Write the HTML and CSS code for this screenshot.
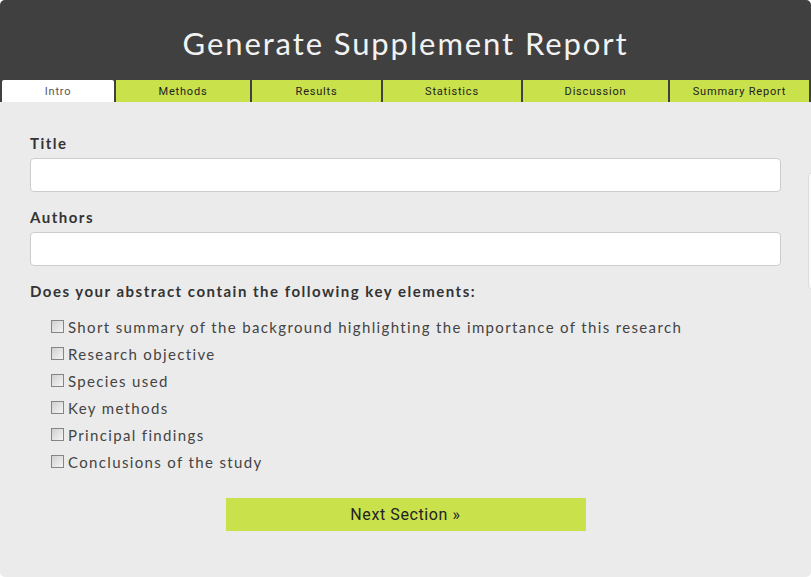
FILE: index.html
```html
<!DOCTYPE html>
<html lang="en">
<head>
<meta charset="utf-8">
<title>Generate Supplement Report</title>
<link rel="stylesheet" href="styles.css">
</head>
<body>
<div class="app">
  <header class="hero">
    <h1 class="hero-title">Generate Supplement Report</h1>
  </header>
  <nav class="tabs">
    <a class="tab tab-active">Intro</a>
    <a class="tab">Methods</a>
    <a class="tab">Results</a>
    <a class="tab">Statistics</a>
    <a class="tab">Discussion</a>
    <a class="tab">Summary Report</a>
  </nav>
  <main class="panel">
    <label class="field-label" for="title">Title</label>
    <input class="text-input" id="title" type="text">
    <label class="field-label" for="authors">Authors</label>
    <input class="text-input" id="authors" type="text">
    <p class="field-label question">Does your abstract contain the following key elements:</p>
    <ul class="checklist">
      <li><label class="check-row"><input class="check" type="checkbox"><span>Short summary of the background highlighting the importance of this research</span></label></li>
      <li><label class="check-row"><input class="check" type="checkbox"><span>Research objective</span></label></li>
      <li><label class="check-row"><input class="check" type="checkbox"><span>Species used</span></label></li>
      <li><label class="check-row"><input class="check" type="checkbox"><span>Key methods</span></label></li>
      <li><label class="check-row"><input class="check" type="checkbox"><span>Principal findings</span></label></li>
      <li><label class="check-row"><input class="check" type="checkbox"><span>Conclusions of the study</span></label></li>
    </ul>
    <div class="actions">
      <button class="next-btn" type="button">Next Section &raquo;</button>
    </div>
  </main>
  <div class="side-tab"></div>
</div>
</body>
</html>
```

FILE: styles.css
```css
html, body {
  margin: 0;
  padding: 0;
  background: #ffffff;
  overflow: hidden;
}

.app {
  position: relative;
  width: 811px;
  height: 577px;
  display: flex;
  flex-direction: column;
  border-radius: 5px;
  overflow: hidden;
  background: #ebebeb;
}

.hero {
  background: #404040;
  height: 80px;
  display: flex;
  align-items: center;
  justify-content: center;
}

.hero-title {
  margin: 6px 0 0 0;
  font-family: "Lato", "Open Sans", sans-serif;
  font-weight: 400;
  font-size: 31px;
  letter-spacing: 1.9px;
  color: #f2f2f2;
}

.tabs {
  display: grid;
  grid-template-columns: 112px 134px 129px 138px 145px 139px;
  column-gap: 2px;
  padding: 0 2px;
  background: #404040;
  height: 22px;
}

.tab {
  display: flex;
  align-items: center;
  justify-content: center;
  background: #c9e14b;
  color: #222;
  font-family: "Roboto", "Liberation Sans", sans-serif;
  font-size: 11px;
  letter-spacing: 0.8px;
  padding-top: 1px;
}

.tab-active {
  background: #ffffff;
  color: #555;
  border-radius: 2px 2px 0 0;
}

.panel {
  flex: 1;
  padding: 31px 30px 0 30px;
  display: flex;
  flex-direction: column;
}

.field-label {
  display: block;
  margin: 0;
  font-family: "Lato", "Open Sans", sans-serif;
  font-weight: 700;
  font-size: 15px;
  line-height: 20px;
  letter-spacing: 1.5px;
  color: #333;
}

.text-input {
  display: block;
  box-sizing: border-box;
  width: 100%;
  height: 34px;
  margin: 5px 0 15px 0;
  border: 1px solid #cccccc;
  border-radius: 4px;
  background: #fff;
}

.question {
  margin-top: 0;
}

.checklist {
  list-style: none;
  margin: 12px 0 0 0;
  padding: 0 0 0 21px;
}

.checklist li {
  height: 27px;
  display: flex;
  align-items: center;
}

.check-row {
  display: flex;
  align-items: center;
  gap: 4px;
  font-family: "Lato", "Open Sans", sans-serif;
  font-size: 15px;
  letter-spacing: 1.35px;
  color: #444;
}

.check {
  appearance: none;
  -webkit-appearance: none;
  box-sizing: border-box;
  width: 13px;
  height: 13px;
  margin: 0;
  border: 1px solid #858585;
  background: linear-gradient(135deg, #d0d0d0, #f5f5f5);
}

.actions {
  display: flex;
  justify-content: center;
  margin-top: 23px;
}

.next-btn {
  width: 360px;
  height: 33px;
  border: none;
  background: #c9e14b;
  color: #222;
  font-family: "Roboto", "Liberation Sans", sans-serif;
  font-size: 16px;
  letter-spacing: 0.6px;
  padding: 0;
}

.side-tab {
  position: absolute;
  left: 808px;
  top: 172px;
  width: 20px;
  height: 118px;
  box-sizing: border-box;
  border: 1px solid #dcdcdc;
  border-radius: 5px;
  background: #fafafa;
}
```
